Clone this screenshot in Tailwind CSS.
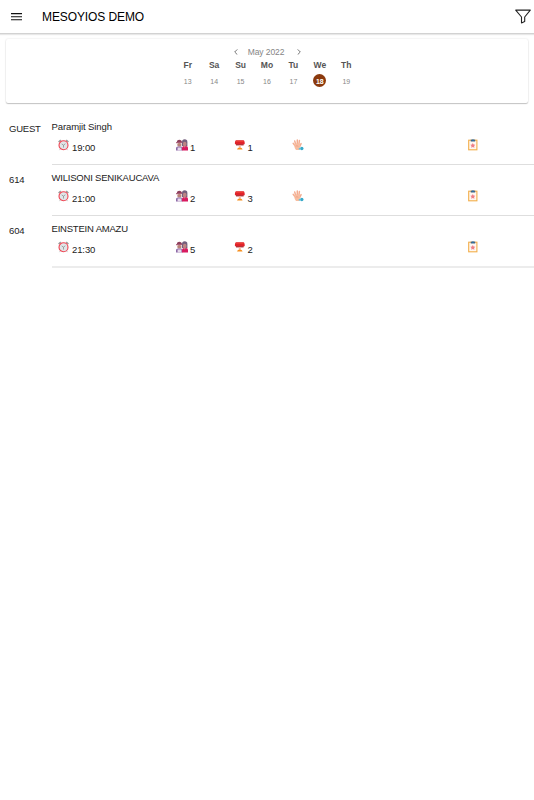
<!DOCTYPE html>
<html lang="en">
<head>
  <meta charset="UTF-8" />
  <meta name="viewport" content="width=device-width, initial-scale=1.0" />
  <title>MESOYIOS DEMO</title>
  <script src="https://cdn.jsdelivr.net/npm/@tailwindcss/browser@4"></script>
</head>
<body class="bg-white min-h-screen text-[#222] font-['Liberation_Sans',Arial,sans-serif]">

  <!-- Icons -->
  <svg class="hidden">
    <symbol id="clock" viewBox="0 0 12 12">
      <path d="M.600 2.800 3 .600M11.400 2.800 9 .600" stroke="#999" stroke-width="1.500" />
      <path d="M2.800 10.200 1.600 11.600M9.200 10.200l1.200 1.400" stroke="#bbb" stroke-width="1" />
      <circle cx="6" cy="6.200" r="4.900" fill="#e1e6e8" stroke="#ee4452" stroke-width="1.200" />
      <path d="M4 4.800 6 6.200 8 4.600M6 6.200V8.800" stroke="#888" stroke-width=".800" fill="none" />
    </symbol>
    <symbol id="people" viewBox="0 0 12 12">
      <path d="M6 6V3a2.600 2.600 0 0 1 5.400 0v4H6z" fill="#75607e" />
      <path d="M.800 3.600C.800 1.400 2 .700 3.400.700s2.600.800 2.600 2.900z" fill="#8d3f5c" />
      <path d="M0 3.200h6.200v1H0z" fill="#a04a68" />
      <rect x="1.300" y="4" width="4.200" height="3.600" rx="1.600" fill="#b98378" />
      <rect x="7" y="2.800" width="3.400" height="4.400" rx="1.600" fill="#bd8584" />
      <path d="M0 11.500V9q0-1.600 2-1.600h3Q6.500 7.400 6.500 9v2.500z" fill="#8d6aa8" />
      <path d="M1.600 8.500h3.800v3H1.600z" fill="#e6d9ea" />
      <path d="M6 11.500V8.500Q6.400 7 8 7h2q2 0 2 2v2.500z" fill="#d81b60" />
      <path d="M7.600 7h2.200l-1.100 1.700z" fill="#c98a84" />
    </symbol>
    <symbol id="table" viewBox="0 0 12 12">
      <path d="M2.300 1.300h7q.9 0 1.100.9l.4 2q0 1.400-1.400 1.400H2.200Q.8 5.600.8 4.200l.4-2q.2-.9 1.100-.9z" fill="#e0222a" />
      <path d="M2 1.800h7.600v1H2z" fill="#ef4035" />
      <path d="M2 5.200h7.600v1.200H2z" fill="#a91820" />
      <path d="M4.800 6.400h2v2.400h-2z" fill="#f9b9a5" />
      <path d="M3 10.400Q3.400 8.600 5.800 8.600t2.800 1.800z" fill="#f7901f" />
    </symbol>
    <symbol id="hand" viewBox="0 0 12 12">
      <path d="M2.900 6.600 1.200 4.400M3.700 5.600 2.700 1.900M5.300 5V1.100M6.900 5.400l.5-3.800M7.700 7.400l1.400-2.800" stroke="#f3ad91" stroke-width="1.500" stroke-linecap="round" />
      <path d="M2.100 5.500 4 4.500h3L8.200 7.200 7.400 10.900H4Q2.300 8.900 2.100 5.500z" fill="#f8bd9f" />
      <path d="M3.600 7.300Q5 6 6.300 7.400" stroke="#e8907c" stroke-width=".600" fill="none" />
      <circle cx="9.800" cy="9.500" r="1.700" fill="#38a9c9" />
      <circle cx="7.600" cy="9.700" r="1" fill="#67c3db" />
    </symbol>
    <symbol id="clipboard" viewBox="0 0 10 12">
      <rect x=".700" y="1.200" width="8.200" height="9.600" fill="#fff8f2" stroke="#f2ae4a" stroke-width="1.100" />
      <path d="M2.700.600h4.500v1.900H2.700z" fill="#45647f" />
      <path d="M4.200.400h1.500v1.400H4.200z" fill="#1976c2" />
      <path d="m4.800 3.900.800 1.500 1.700.3-1.200 1.200.3 1.800-1.600-.8-1.600.8.3-1.800-1.200-1.200 1.700-.3z" fill="#ee7f86" />
    </symbol>
  </svg>

  <!-- Top Bar -->
  <header class="h-[34px] flex items-center border-b border-[#d2d2d2] shadow-[0_1px_1px_#e8e8e8] pl-[11px] pr-[3px] text-black">
    <svg class="w-[11px] h-2" viewBox="0 0 11 8" stroke="#111" stroke-width="1.1">
      <path d="M0 .600h11M0 3.700h11M0 6.800h11" />
    </svg>
    <h1 class="ml-5 text-[12px] leading-4 tracking-[-0.1px]">MESOYIOS DEMO</h1>
    <svg class="ml-auto w-4 h-[15px]" viewBox="0 0 16 15" fill="none" stroke="#222" stroke-width="1.1" stroke-linejoin="round">
      <path d="M.700 1.100h14.600L9.700 8v4.500l-3.200 1.400V8z" />
    </svg>
  </header>

  <!-- Calendar -->
  <section class="mt-[5px] mx-[6px] h-[64px] rounded-[2px] bg-white shadow-[0_1px_1px_#c4c4c4,0_0_2px_#ddd] flex flex-col items-center pt-2">
    <div class="flex items-center h-[10px] text-[8.5px] text-[#858585]">
      <svg class="w-[4px] h-[6px]" viewBox="0 0 4 6" fill="none" stroke="#666" stroke-width=".9"><path d="M3.300.400.700 3l2.600 2.600" /></svg>
      <span class="w-[59px] text-center pr-[2px] tracking-[-0.1px]">May 2022</span>
      <svg class="w-[4px] h-[6px]" viewBox="0 0 4 6" fill="none" stroke="#666" stroke-width=".9"><path d="M.700.400 3.300 3 .700 5.600" /></svg>
    </div>
    <div class="grid grid-cols-7 w-[185px] text-center text-[8.5px] leading-[10px] font-bold text-[#555] mt-[3px]">
      <span>Fr</span>
      <span>Sa</span>
      <span>Su</span>
      <span>Mo</span>
      <span>Tu</span>
      <span>We</span>
      <span>Th</span>
    </div>
    <div class="grid grid-cols-7 items-center justify-items-center w-[185px] h-[14px] text-[7px] leading-[14px] text-[#888] mt-[3px]">
      <span class="pt-[2px]">13</span>
      <span class="pt-[2px]">14</span>
      <span class="pt-[2px]">15</span>
      <span class="pt-[2px]">16</span>
      <span class="pt-[2px]">17</span>
      <span class="w-[13px] h-[13px] -mt-px rounded-full bg-[#8b3a0e] text-white font-bold text-center leading-[15px]">18</span>
      <span class="pt-[2px]">19</span>
    </div>
  </section>

  <!-- Reservations -->
  <main class="pt-[11px] text-[9.5px] leading-3 tracking-[-0.1px]">
    <div class="flex h-[51px]">
      <div class="w-[52px] pl-[9px] pt-[9px] tracking-[-0.2px]">GUEST</div>
      <div class="flex-1 border-b border-[#dedede] pt-[7px]">
        <p class="-ml-[0.5px]">Paramjit Singh</p>
        <div class="grid grid-cols-8 w-[468px] ml-[6px] mt-[6px]">
          <div class="flex"><svg class="w-[11px] h-[12px]"><use href="#clock" /></svg><span class="pl-[3px] pt-[3px]">19:00</span></div>
          <div></div>
          <div class="flex pl-px"><svg class="w-[12px] h-[12px]"><use href="#people" /></svg><span class="pl-[2px] pt-[3px]">1</span></div>
          <div class="flex"><svg class="w-[12px] h-[12px]"><use href="#table" /></svg><span class="pl-[2px] pt-[3px]">1</span></div>
          <div><svg class="w-[12px] h-[12px]"><use href="#hand" /></svg></div>
          <div></div>
          <div></div>
          <div><svg class="w-[10px] h-[12px]"><use href="#clipboard" /></svg></div>
        </div>
      </div>
    </div>

    <div class="flex h-[51px]">
      <div class="w-[52px] pl-[9px] pt-[9px]">614</div>
      <div class="flex-1 border-b border-[#dedede] pt-[7px]">
        <p class="-ml-[0.5px] tracking-[-0.2px]">WILISONI SENIKAUCAVA</p>
        <div class="grid grid-cols-8 w-[468px] ml-[6px] mt-[6px]">
          <div class="flex"><svg class="w-[11px] h-[12px]"><use href="#clock" /></svg><span class="pl-[3px] pt-[3px]">21:00</span></div>
          <div></div>
          <div class="flex pl-px"><svg class="w-[12px] h-[12px]"><use href="#people" /></svg><span class="pl-[2px] pt-[3px]">2</span></div>
          <div class="flex"><svg class="w-[12px] h-[12px]"><use href="#table" /></svg><span class="pl-[2px] pt-[3px]">3</span></div>
          <div><svg class="w-[12px] h-[12px]"><use href="#hand" /></svg></div>
          <div></div>
          <div></div>
          <div><svg class="w-[10px] h-[12px]"><use href="#clipboard" /></svg></div>
        </div>
      </div>
    </div>

    <div class="flex h-[52px]">
      <div class="w-[52px] pl-[9px] pt-[9px]">604</div>
      <div class="flex-1 border-b-2 border-[#ececec] pt-[7px]">
        <p class="-ml-[0.5px] tracking-[-0.2px]">EINSTEIN AMAZU</p>
        <div class="grid grid-cols-8 w-[468px] ml-[6px] mt-[6px]">
          <div class="flex"><svg class="w-[11px] h-[12px]"><use href="#clock" /></svg><span class="pl-[3px] pt-[3px]">21:30</span></div>
          <div></div>
          <div class="flex pl-px"><svg class="w-[12px] h-[12px]"><use href="#people" /></svg><span class="pl-[2px] pt-[3px]">5</span></div>
          <div class="flex"><svg class="w-[12px] h-[12px]"><use href="#table" /></svg><span class="pl-[2px] pt-[3px]">2</span></div>
          <div></div>
          <div></div>
          <div></div>
          <div><svg class="w-[10px] h-[12px]"><use href="#clipboard" /></svg></div>
        </div>
      </div>
    </div>
  </main>

</body>
</html>
